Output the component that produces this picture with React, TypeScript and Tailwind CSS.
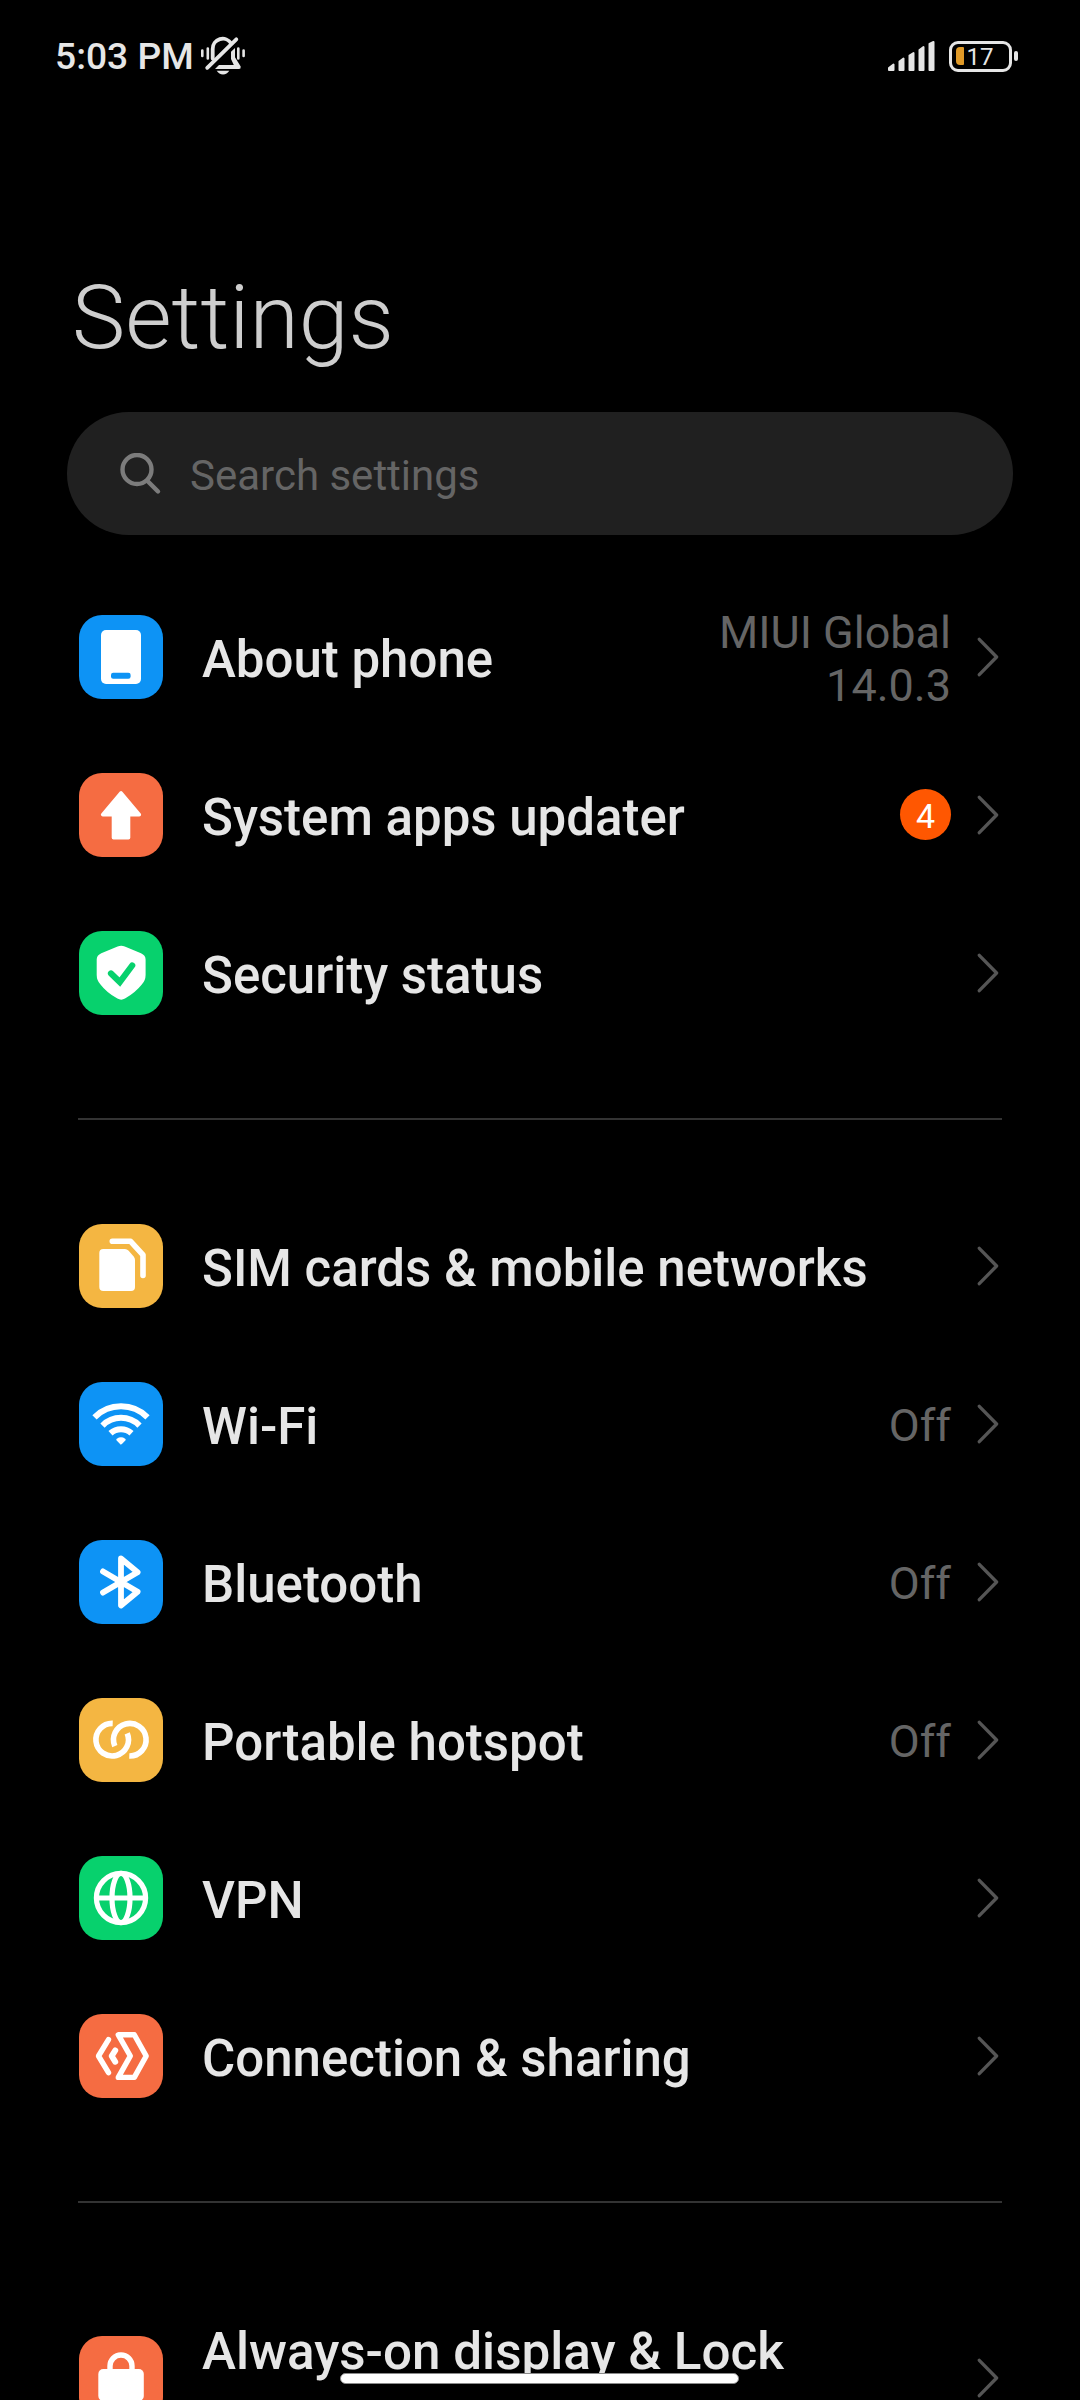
import type { ReactNode } from "react"

type Item = {
    title: string
    color: string
    icon: ReactNode
    value?: string
    badge?: number
}

const blue = "bg-[#0d93f5]"
const orange = "bg-[#f56c42]"
const green = "bg-[#07d16d]"
const yellow = "bg-[#f4b642]"

const PhoneIcon = (
    <>
        <rect x="22" y="15" width="40" height="54" rx="5" fill="#fff" />
        <rect x="32" y="57.8" width="19.6" height="6" rx="2.2" fill="#0d93f5" />
    </>
)

const ArrowIcon = (
    <path
        d="M42 19.8 23.7 41.7h10.800V64.800h15V41.700h10.800z"
        fill="#fff" stroke="#fff" strokeWidth="3.6" strokeLinejoin="round"
    />
)

const ShieldIcon = (
    <>
        <path
            d="M38.600 15.500q3.600-1.600 7.200 0L62 22.200q4.600 2 4.600 6.200V44q0 5.500-3.800 9.500Q56.500 61.500 46 67.600q-3.800 2.200-7.600 0Q27.500 61.500 21.500 53.500q-3.800-4-3.800-9.500V28.400q0-4.200 4.600-6.200z"
            fill="#fff"
        />
        <path d="M32 42.500 40.800 51 53.200 34.500" fill="none" stroke="#07d16d" strokeWidth="6.200" strokeLinecap="round" />
    </>
)

const SimIcon = (
    <>
        <path d="M24.300 25H46q2 0 3.400 1.500l5.300 6q1.300 1.500 1.300 3.500v27q0 4-4 4H24.300q-4 0-4-4V29q0-4 4-4z" fill="#fff" />
        <path d="M33.300 17.300H51.600L64 30.800V51.500" fill="none" stroke="#fff" strokeWidth="5.600" strokeLinecap="round" strokeLinejoin="round" />
    </>
)

const WifiIcon = (
    <g fill="none" stroke="#fff" strokeWidth="6">
        <path d="M15.500 35.300A37.300 37.300 0 0 1 68.500 35.300" />
        <path d="M23.500 43.600A26 26 0 0 1 60.500 43.600" />
        <path d="M31.500 51.300A15.500 15.500 0 0 1 52.500 51.300" />
        <path d="M42 61.200 38.600 57.700Q42 55.300 45.400 57.700z" fill="#fff" strokeWidth="2.600" strokeLinejoin="round" />
    </g>
)

const BluetoothIcon = (
    <path
        d="M24 31.400 58.600 51.700 42 65.500V18.500L58.600 32.300 24 52.600"
        fill="none" stroke="#fff" strokeWidth="5.800" strokeLinecap="round" strokeLinejoin="round"
    />
)

const HotspotIcon = (
    <g fill="none" stroke="#fff" strokeWidth="5.600">
        <path d="M33.700 25.400A16.300 16.300 0 1 0 48.200 35.300" />
        <path d="M50.300 58A16.300 16.300 0 1 0 35.800 48.100" />
    </g>
)

const GlobeIcon = (
    <g fill="none" stroke="#fff" strokeWidth="5.200">
        <circle cx="42" cy="42" r="24.600" />
        <ellipse cx="42" cy="42" rx="9" ry="24.600" />
        <path d="M17.400 42H66.600" />
    </g>
)

const ShareIcon = (
    <g fill="none" stroke="#fff" strokeWidth="5.400" strokeLinecap="round" strokeLinejoin="round">
        <path d="M29.500 25.600 19.500 42 29.500 58.600" />
        <path d="M36.200 36.500 32.700 42 36.200 47.700" strokeWidth="6" />
        <path d="M39.300 20.800H55.300L67.200 42 55.300 63.400H39.300L51.300 42z" />
    </g>
)

const LockIcon = (
    <>
        <rect x="19.300" y="33" width="45.500" height="32" rx="5" fill="#fff" />
        <path d="M31 36V30a11 11 0 0 1 22 0v6" fill="none" stroke="#fff" strokeWidth="5.400" />
    </>
)

const groups: Item[][] = [
    [
        { title: "About phone", color: blue, icon: PhoneIcon, value: "MIUI Global 14.0.3" },
        { title: "System apps updater", color: orange, icon: ArrowIcon, badge: 4 },
        { title: "Security status", color: green, icon: ShieldIcon },
    ],
    [
        { title: "SIM cards & mobile networks", color: yellow, icon: SimIcon },
        { title: "Wi-Fi", color: blue, icon: WifiIcon, value: "Off" },
        { title: "Bluetooth", color: blue, icon: BluetoothIcon, value: "Off" },
        { title: "Portable hotspot", color: yellow, icon: HotspotIcon, value: "Off" },
        { title: "VPN", color: green, icon: GlobeIcon },
        { title: "Connection & sharing", color: orange, icon: ShareIcon },
    ],
]

function Tile({ color, children }: { color: string, children: ReactNode }) {
    return (
        <div className={`size-[84px] shrink-0 rounded-[23px] ${color}`}>
            <svg viewBox="0 0 84 84" className="size-full">{children}</svg>
        </div>
    )
}

function Chevron() {
    return (
        <svg viewBox="0 0 22 40" className="ml-[26px] h-[40px] w-[22px] shrink-0">
            <path d="M2.300 2.300 19.600 20 2.300 37.700" fill="none" stroke="#555" strokeWidth="3.300" strokeLinecap="round" strokeLinejoin="round" />
        </svg>
    )
}

function Row({ item }: { item: Item }) {
    return (
        <div className="flex h-[158px] items-center pr-[81px] pl-[79px]">
            <Tile color={item.color}>{item.icon}</Tile>
            <span className="ml-[39px] flex-1 pt-[5px] text-[51px] leading-[60px] font-medium whitespace-nowrap">{item.title}</span>
            {item.value && (
                <span className="w-[260px] pt-[3px] text-right text-[45px] leading-[53px] text-[#656565]">{item.value}</span>
            )}
            {item.badge && (
                <span className="mb-px flex size-[51px] items-center justify-center rounded-full bg-[#ff5701] pt-[2px] text-[34px] leading-none text-white">{item.badge}</span>
            )}
            <Chevron />
        </div>
    )
}

function Divider() {
    return <hr className="mx-[78px] mt-[66px] mb-[67px] h-[2px] border-0 bg-[#333]" />
}

function StatusBar() {
    return (
        <header className="flex h-[112px] items-center pr-[62px] pl-[55px]">
            <span className="pt-[1px] text-[37.200px] leading-none font-medium">5:03 PM</span>
            <svg viewBox="0 0 46 40" className="ml-[6px] h-[40px] w-[46px]" fill="none" stroke="#e6e6e6" strokeWidth="3.800" strokeLinecap="round">
                <path d="M12.700 22.500V13A10 10 0 0 1 31.200 7.500" />
                <path d="M36.300 3.300 7.200 31.800" />
                <path d="M35 12V21.300L40.700 30.500Q41 33 39 33H15L19 29H33.800L31 23V15.800z" fill="#e6e6e6" stroke="none" />
                <path d="M16.700 34.800H29.300Q27 38.500 23 38.500T16.700 34.800z" fill="#e6e6e6" stroke="none" />
                <path d="M2.300 14.500V20M7.800 12.500V22.500M38.300 12.500V22.500M43.600 14.500V20" strokeWidth="2.600" />
            </svg>
            <svg viewBox="0 0 50 32" className="ml-auto h-[32px] w-[50px]" fill="#e6e6e6" stroke="#e6e6e6" strokeWidth="2" strokeLinejoin="round">
                <path d="M2 30V28L6.500 24.500V30z" />
                <path d="M12.500 30V21.500L16.500 18.500V30z" />
                <path d="M22.500 30V15.500L26.500 13V30z" />
                <path d="M32.500 30V10L36.500 7V30z" />
                <path d="M42.500 30V4L46.500 2V30z" />
            </svg>
            <div className="ml-[12px] flex h-[31px] w-[63px] items-center rounded-[9px] border-[3px] border-[#e6e6e6] pl-[4px]">
                <span className="h-[18px] w-[8px] rounded-l-[4px] rounded-r-[1px] bg-[#e09a28]" />
                <span className="ml-[2.500px] pt-[1px] text-[24px] leading-none text-[#e6e6e6]">17</span>
            </div>
            <span className="ml-[2px] h-[10px] w-[4px] rounded-full bg-[#e6e6e6]" />
        </header>
    )
}

export default function App() {
    return (
        <div className="relative h-[2400px] w-[1080px] overflow-hidden bg-black font-['Roboto',sans-serif] text-[#e6e6e6]">
            <StatusBar />
            <h1 className="mt-[153px] ml-[72px] text-[89.700px] leading-[106px] font-light text-[#cecece]">Settings</h1>
            <div className="mx-[67px] mt-[41px] mb-[43px] flex h-[123px] items-center rounded-full bg-[#202020] pl-[53px]">
                <svg viewBox="0 0 42 42" className="size-[42px]" fill="none" stroke="#7c7c7c" strokeWidth="4.400" strokeLinecap="round">
                    <circle cx="17" cy="16.500" r="14.500" />
                    <path d="M27.500 28 38 38.500" />
                </svg>
                <span className="ml-[28px] pt-[4px] text-[42px] leading-[50px] text-[#656565]">Search settings</span>
            </div>
            {groups.map((items, i) => (
                <section key={i}>
                    {items.map(item => <Row key={item.title} item={item} />)}
                    <Divider />
                </section>
            ))}
            {/* taller row, cut off by the bottom of the screen */}
            <div className="flex h-[216px] items-center pr-[81px] pl-[79px]">
                <Tile color={orange}>{LockIcon}</Tile>
                <span className="mb-[53px] ml-[39px] flex-1 text-[51.200px] leading-[60px] font-medium whitespace-nowrap">Always-on display &amp; Lock</span>
                <Chevron />
            </div>
            <div className="absolute bottom-[16px] left-[340px] h-[11px] w-[399px] rounded-full border border-[#8a8a8a] bg-white" />
        </div>
    )
}
